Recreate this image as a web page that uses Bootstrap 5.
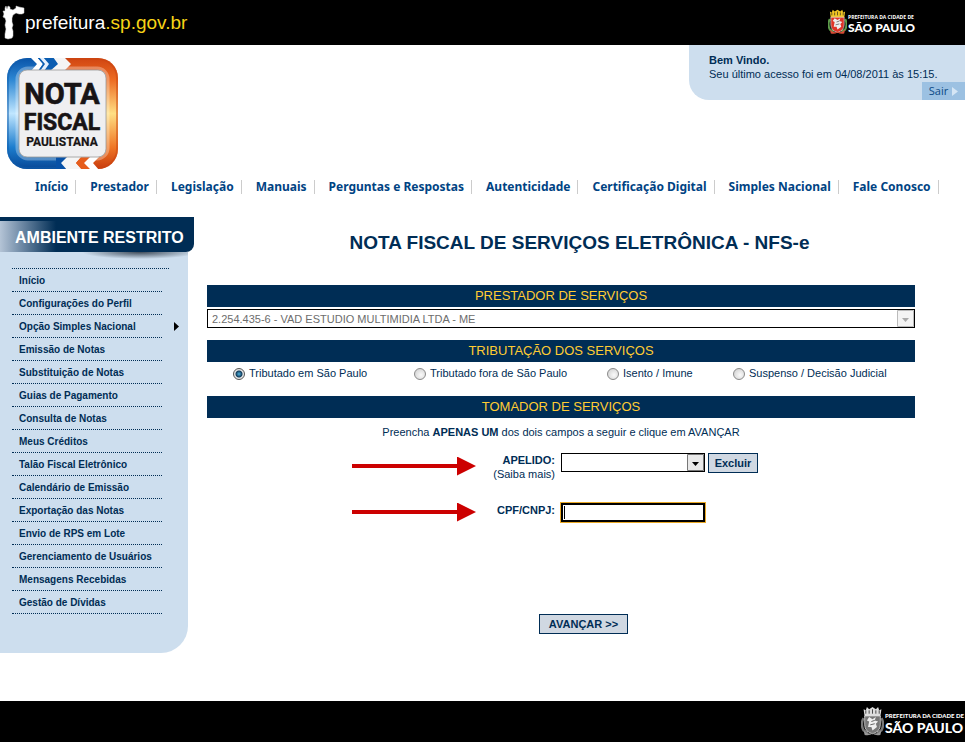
<!DOCTYPE html>
<html lang="pt-BR">
<head>
<meta charset="utf-8">
<meta name="viewport" content="width=device-width, initial-scale=1">
<title>Nota Fiscal Paulistana</title>
<link href="https://cdn.jsdelivr.net/npm/bootstrap@5.3.0/dist/css/bootstrap.min.css" rel="stylesheet">
<style>
:root { --navy: #002d55; --sky: #cddeee; --gold: #fc3; }
body { font-family: "Liberation Sans", Arial, sans-serif; font-size: 11px; line-height: 14px; color: var(--navy); background: #fff; }
a { color: inherit; text-decoration: none; }
.topbar { height: 45px; }
.site-name { font-size: 19px; line-height: 24px; color: #fff; }
.site-name span { color: #f7d417; }
.city-top { margin-right: 48px; }
.welcome { width: 276px; height: 55px; background: var(--sky); border-bottom-left-radius: 20px; padding: 8px 0 0 20px; }
.logout { width: 43px; height: 18px; background: #9cc1e2; color: #0b4a86; font-family: "Open Sans", sans-serif; font-size: 11px; }
.brand-logo { margin: 12px 0 0 6px; }
.main-menu { font-family: "Noto Sans", Tahoma, sans-serif; font-size: 12px; font-weight: 700; line-height: 14px; color: #004383; padding: 10px 0 0 35px; gap: 14px; }
.main-menu a { display: block; padding-right: 7px; border-right: 1px solid #ccc; white-space: nowrap; }
.side { width: 194px; padding-top: 23px; }
.side-title { height: 35px; border-top: 4px solid var(--navy); border-bottom-right-radius: 8px; background: linear-gradient(90deg, #b4c4d6 0, #6d88a4 22px, var(--navy) 56px); color: #fff; font-size: 16px; font-weight: 700; padding: 5px 11px 0 15px; line-height: 24px; position: relative; z-index: 1; white-space: nowrap; }
.side-panel { width: 188px; background: radial-gradient(ellipse 58px 7px at 140px 0, #3d4a58, transparent), var(--sky); border-bottom-right-radius: 27px; padding: 16px 19px 39px 12px; font-size: 10px; font-weight: 700; }
.side-panel ul { border-top: 1px dotted var(--navy); }
.side-panel li { width: 150px; height: 23px; border-bottom: 1px dotted var(--navy); padding: 5px 0 0 7px; white-space: nowrap; line-height: 14px; }
.sub-arrow { width: 5px; height: 9px; margin: 2px -17px 0 0; }
.page-title { font-size: 19px; line-height: 24px; font-weight: 700; margin: 37px 0 30px; }
.form-area { padding: 0 50px 0 13px; }
.section-bar { background: var(--navy); color: var(--gold); font-size: 13px; line-height: 22px; height: 22px; font-weight: 400; text-align: center; margin: 0; }
.tax-bar { margin-top: 12px; }
.provider-select { margin-top: 2px; }
.box-select { appearance: none; height: 19px; border: 1px solid #000; border-radius: 0; padding: 0 20px 0 4px; font-size: 11px; line-height: 16px; color: var(--navy); background: #fff url("data:image/svg+xml,%3Csvg xmlns='http://www.w3.org/2000/svg' width='17' height='17'%3E%3Cpath d='M.5.5h16v16H.5z' fill='%23e9e9e9' stroke='%23777'/%3E%3Cpath d='M5 8h7l-3.500 4z'/%3E%3C/svg%3E") right 0 center no-repeat; }
.box-select:disabled { color: #6d6d6d; opacity: 1; background-image: url("data:image/svg+xml,%3Csvg xmlns='http://www.w3.org/2000/svg' width='17' height='17'%3E%3Cpath d='M.5.5h16v16H.5z' fill='%23f4f4f4' stroke='%23bbb'/%3E%3Cpath d='M5 8h7l-3.500 4z' fill='%23aaa'/%3E%3C/svg%3E"); }
.tax-options { display: grid; grid-template-columns: 181fr 193fr 126fr 182fr; padding: 4px 0 0 26px; height: 34px; }
.tax-options label { white-space: nowrap; }
.tax-options input { appearance: none; width: 12px; height: 12px; margin: 2px 4px 0 0; border: 1px solid #8a8a8a; border-radius: 50%; background: radial-gradient(circle at 60% 60%, #fafafa, #ccc); flex: none; }
.tax-options input:checked { border-color: #555; background: radial-gradient(circle, #4fb4e0 0, #123c5c 3px, #e6e6e6 4px); }
.hint { margin: 7px 0 14px; }
.taker-grid { display: grid; grid-template-columns: 124px 79px auto auto; justify-content: center; margin-right: 12px; align-items: start; }
.taker-grid .form-field { width: 144px; margin-left: 6px; }
.taker-grid label { font-weight: 700; }
.cpf-row { margin-top: 22px; }
.cpf-field { height: 19px; border: 2px solid #000; border-radius: 0; padding: 0 4px; outline: 1px solid #e9a825; font-size: 11px; background: linear-gradient(#000, #000) 1px 1px / 1px 13px no-repeat #fff; }
.plain-btn { height: 20px; border: 1px solid var(--navy); border-radius: 0; background: #d0d8e2; color: var(--navy); font: 700 11px/16px "Liberation Sans", Arial, sans-serif; padding: 0; }
.btn-remove { width: 50px; margin-left: 3px; }
.btn-next { width: 89px; }
.next-row { padding: 92px 0 0 45px; }
.foot { height: 41px; margin-top: 48px; }
.city-small { font: 700 5px "Open Sans", sans-serif; }
.city-big { font: 900 12px Lato, sans-serif; }
.foot .city-small { font: 900 6px Lato, sans-serif; }
.foot .city-big { font-size: 14px; }
</style>
</head>
<body>
<svg class="d-none" aria-hidden="true">
  <symbol id="crest" viewBox="0 0 20 26">
    <path d="M2 2l2 1 1-3 2 2 3-2 3 2 2-2 1 3 2-1-1 7H3z" fill="var(--crown)"/>
    <path d="M4 3v3M7 3v3M10 2v4M13 3v3M16 3v3" stroke="#222" stroke-width=".7"/>
    <path d="M2 10q-3 5 0 11l4 2M18 10q3 5 0 11l-4 2" fill="none" stroke="var(--leaf)" stroke-width="2.200"/>
    <path d="M3 8h14v8q0 6-7 8-7-2-7-8z" fill="var(--shield)" stroke="#ddd" stroke-width=".7"/>
    <path d="M6 18l1-5-2-1 2-3 3 2 3-2-1 3 3 1-2 2 1 3-4 3-1-3z" fill="#eee"/>
    <path d="M9 13l3-1M8 16l4-1" stroke="#555" stroke-width=".8"/>
    <path d="M2 21q4 4 8 2 4 2 8-2l-1 4q-4 1-7-1-3 2-7 1z" fill="var(--ribbon)"/>
  </symbol>
</svg>

<header>
  <div class="topbar bg-black d-flex justify-content-between align-items-center">
    <a href="#" class="d-flex align-items-center site-name">
      <svg width="25" height="38" viewBox="0 0 25 38" aria-hidden="true"><path d="M5 4l1-2 1 3 1-3 2 1 0 2 3 1 3-2 0-2 3 1 5 1 0 5-2 1-3 0-3-1-3 2-1 3 0 4 1 3-1 3 1 3 0 5-1 2-4 1-3-1 0-4 1-5-1-4 1-4-1-3-2-1 1-3-1-3 2 0z" fill="#fff" stroke="#ccc" stroke-width=".5"/></svg>
      <b class="fw-normal">prefeitura<span>.sp.gov.br</span></b>
    </a>
    <svg class="city-top" width="90" height="28" viewBox="0 0 90 28" role="img" aria-label="Prefeitura da Cidade de São Paulo">
      <use href="#crest" x="1" y="0" width="19" height="26" style="--crown:#f3c623;--leaf:#5d9b4b;--shield:#df3428;--ribbon:#d84b35"/>
      <text x="21" y="10" fill="#fff" class="city-small">PREFEITURA DA CIDADE DE</text>
      <text x="21" y="23" fill="#fff" class="city-big">SÃO PAULO</text>
    </svg>
  </div>
  <div class="d-flex justify-content-between align-items-start">
    <a href="#" class="brand-logo">
      <svg class="d-block" width="113" height="113" viewBox="0 0 113 113" role="img" aria-label="Nota Fiscal Paulistana">
        <defs>
          <linearGradient id="blue" x1="0" y1="0" x2="0" y2="1"><stop offset="0" stop-color="#0751a7"/><stop offset=".2" stop-color="#2d87d3"/><stop offset=".5" stop-color="#c0e6ff"/><stop offset=".8" stop-color="#1c7dce"/><stop offset="1" stop-color="#064594"/></linearGradient>
          <linearGradient id="orange" x1="0" y1="0" x2="0" y2="1"><stop offset="0" stop-color="#cf4311"/><stop offset=".2" stop-color="#ed6b22"/><stop offset=".5" stop-color="#ffdf83"/><stop offset=".8" stop-color="#ef7625"/><stop offset="1" stop-color="#c7390c"/></linearGradient>
          <linearGradient id="edge" x1="0" y1="0" x2="1" y2="0"><stop offset="0" stop-color="#0f5cab"/><stop offset=".45" stop-color="#0f5cab"/><stop offset=".55" stop-color="#c9430f"/><stop offset="1" stop-color="#c9430f"/></linearGradient>
          <clipPath id="frame"><rect x="1" y="1" width="111" height="111" rx="20"/></clipPath>
        </defs>
        <g clip-path="url(#frame)">
          <path d="M0 0h57v113H0z" fill="url(#blue)"/>
          <path d="M57 0h56v113H57z" fill="url(#orange)"/>
          <rect x="1" y="1" width="111" height="111" rx="20" fill="none" stroke="url(#edge)" stroke-width="4" opacity=".5"/>
          <rect x="11" y="11" width="91" height="91" rx="11" fill="none" stroke="#fff" stroke-width="3" opacity=".3"/>
          <path d="M24 0h7l6 7-5 7h-7l6-7z" fill="#fff"/>
          <path d="M37 0h13l6 7-10 7h-8l5-7z" fill="#0b5db1"/>
          <path d="M31 0h6l6 7-5 7h-6l5-7z" fill="#0b5db1"/>
          <path d="M33 0h4l6 7-5 7h-4l5-7z" fill="#e5f0fc"/>
          <path d="M47 0h11l7 7-7 7H44l8-7z" fill="#f5f5f5"/>
          <path d="M50 99h18v14H50z" fill="#0751a7"/>
          <path d="M62 99h14l-6 7 7 7H61l-6-7z" fill="#f5f5f5"/>
          <path d="M76 99h11l-6 7 6 7H76l-6-7z" fill="#e65d1c"/>
          <path d="M85 99h9l-7 7 6 7h-8l-7-7z" fill="#fff"/>
        </g>
        <rect x="13" y="13" width="87" height="87" rx="8" fill="#efeff1" stroke="#aaa" stroke-width="1"/>
        <g fill="#181415" stroke="#181415" stroke-width=".6" font-family="Roboto,'Liberation Sans',sans-serif" font-weight="700" text-anchor="middle">
          <text x="56" y="47" font-size="29">NOTA</text>
          <text x="56" y="73" font-size="23">FISCAL</text>
          <text x="56" y="89" font-size="12" stroke-width=".2">PAULISTANA</text>
        </g>
      </svg>
    </a>
    <div class="welcome d-flex flex-column">
      <strong>Bem Vindo.</strong>
      <span>Seu último acesso foi em 04/08/2011 às 15:15.</span>
      <a href="#" class="logout d-flex align-items-center justify-content-center align-self-end mt-auto gap-1">Sair
        <svg width="6" height="9" viewBox="0 0 6 9" aria-hidden="true"><path d="M0 0l6 4.500L0 9z" fill="#d5e6f5"/></svg></a>
    </div>
  </div>
  <nav aria-label="Principal">
    <ul class="main-menu list-unstyled d-flex mb-0">
      <li><a href="#">Início</a></li>
      <li><a href="#">Prestador</a></li>
      <li><a href="#">Legislação</a></li>
      <li><a href="#">Manuais</a></li>
      <li><a href="#">Perguntas e Respostas</a></li>
      <li><a href="#">Autenticidade</a></li>
      <li><a href="#">Certificação Digital</a></li>
      <li><a href="#">Simples Nacional</a></li>
      <li><a href="#">Fale Conosco</a></li>
    </ul>
  </nav>
</header>

<div class="d-flex align-items-start">
  <aside class="side flex-shrink-0">
    <h2 class="side-title mb-0">AMBIENTE RESTRITO</h2>
    <nav class="side-panel" aria-label="Ambiente restrito">
      <ul class="list-unstyled mb-0">
        <li><a href="#">Início</a></li>
        <li><a href="#">Configurações do Perfil</a></li>
        <li class="d-flex justify-content-between"><a href="#">Opção Simples Nacional</a>
          <svg class="sub-arrow" viewBox="0 0 5 9" aria-hidden="true"><path d="M0 0l5 4.500L0 9z"/></svg></li>
        <li><a href="#">Emissão de Notas</a></li>
        <li><a href="#">Substituição de Notas</a></li>
        <li><a href="#">Guias de Pagamento</a></li>
        <li><a href="#">Consulta de Notas</a></li>
        <li><a href="#">Meus Créditos</a></li>
        <li><a href="#">Talão Fiscal Eletrônico</a></li>
        <li><a href="#">Calendário de Emissão</a></li>
        <li><a href="#">Exportação das Notas</a></li>
        <li><a href="#">Envio de RPS em Lote</a></li>
        <li><a href="#">Gerenciamento de Usuários</a></li>
        <li><a href="#">Mensagens Recebidas</a></li>
        <li><a href="#">Gestão de Dívidas</a></li>
      </ul>
    </nav>
  </aside>

  <main class="flex-grow-1">
    <h1 class="page-title text-center">NOTA FISCAL DE SERVIÇOS ELETRÔNICA - NFS-e</h1>
    <form class="form-area">
      <h2 class="section-bar">PRESTADOR DE SERVIÇOS</h2>
      <select class="box-select provider-select w-100 d-block" aria-label="Prestador de serviços" disabled>
        <option>2.254.435-6 - VAD ESTUDIO MULTIMIDIA LTDA - ME</option>
      </select>
      <h2 class="section-bar tax-bar">TRIBUTAÇÃO DOS SERVIÇOS</h2>
      <div class="tax-options">
        <label class="d-flex align-items-start"><input type="radio" name="tributacao" checked>Tributado em São Paulo</label>
        <label class="d-flex align-items-start"><input type="radio" name="tributacao">Tributado fora de São Paulo</label>
        <label class="d-flex align-items-start"><input type="radio" name="tributacao">Isento / Imune</label>
        <label class="d-flex align-items-start"><input type="radio" name="tributacao">Suspenso / Decisão Judicial</label>
      </div>
      <h2 class="section-bar">TOMADOR DE SERVIÇOS</h2>
      <p class="hint text-center">Preencha <strong>APENAS UM</strong> dos dois campos a seguir e clique em AVANÇAR</p>
      <div class="taker-grid">
        <svg class="mt-1" width="124" height="19" viewBox="0 0 124 19" aria-hidden="true"><path d="M0 7h105V-.5l19 9.500-19 9.500V11H0z" fill="#c00"/></svg>
        <div class="text-end"><label class="d-block" for="apelido">APELIDO:</label><a href="#">(Saiba mais)</a></div>
        <select class="box-select form-field" id="apelido"><option></option></select>
        <button type="button" class="plain-btn btn-remove">Excluir</button>
      </div>
      <div class="taker-grid cpf-row">
        <svg width="124" height="19" viewBox="0 0 124 19" aria-hidden="true"><path d="M0 7h105V-.5l19 9.500-19 9.500V11H0z" fill="#c00"/></svg>
        <label class="text-end" for="cpf">CPF/CNPJ:</label>
        <input class="cpf-field form-field" id="cpf" type="text">
        <span class="btn-remove"></span>
      </div>
      <div class="next-row text-center"><button type="submit" class="plain-btn btn-next">AVANÇAR &gt;&gt;</button></div>
    </form>
  </main>
</div>

<footer class="foot bg-black d-flex justify-content-end align-items-center">
  <svg width="104" height="30" viewBox="0 0 104 30" role="img" aria-label="Prefeitura da Cidade de São Paulo">
    <use href="#crest" x="0" y="0" width="23" height="29" style="--crown:#ddd;--leaf:#777;--shield:#777;--ribbon:#999"/>
    <text x="24" y="11" fill="#fff" class="city-small">PREFEITURA DA CIDADE DE</text>
    <text x="24" y="26" fill="#fff" class="city-big">SÃO PAULO</text>
  </svg>
</footer>
<script src="https://cdn.jsdelivr.net/npm/bootstrap@5.3.0/dist/js/bootstrap.bundle.min.js"></script>
</body>
</html>
